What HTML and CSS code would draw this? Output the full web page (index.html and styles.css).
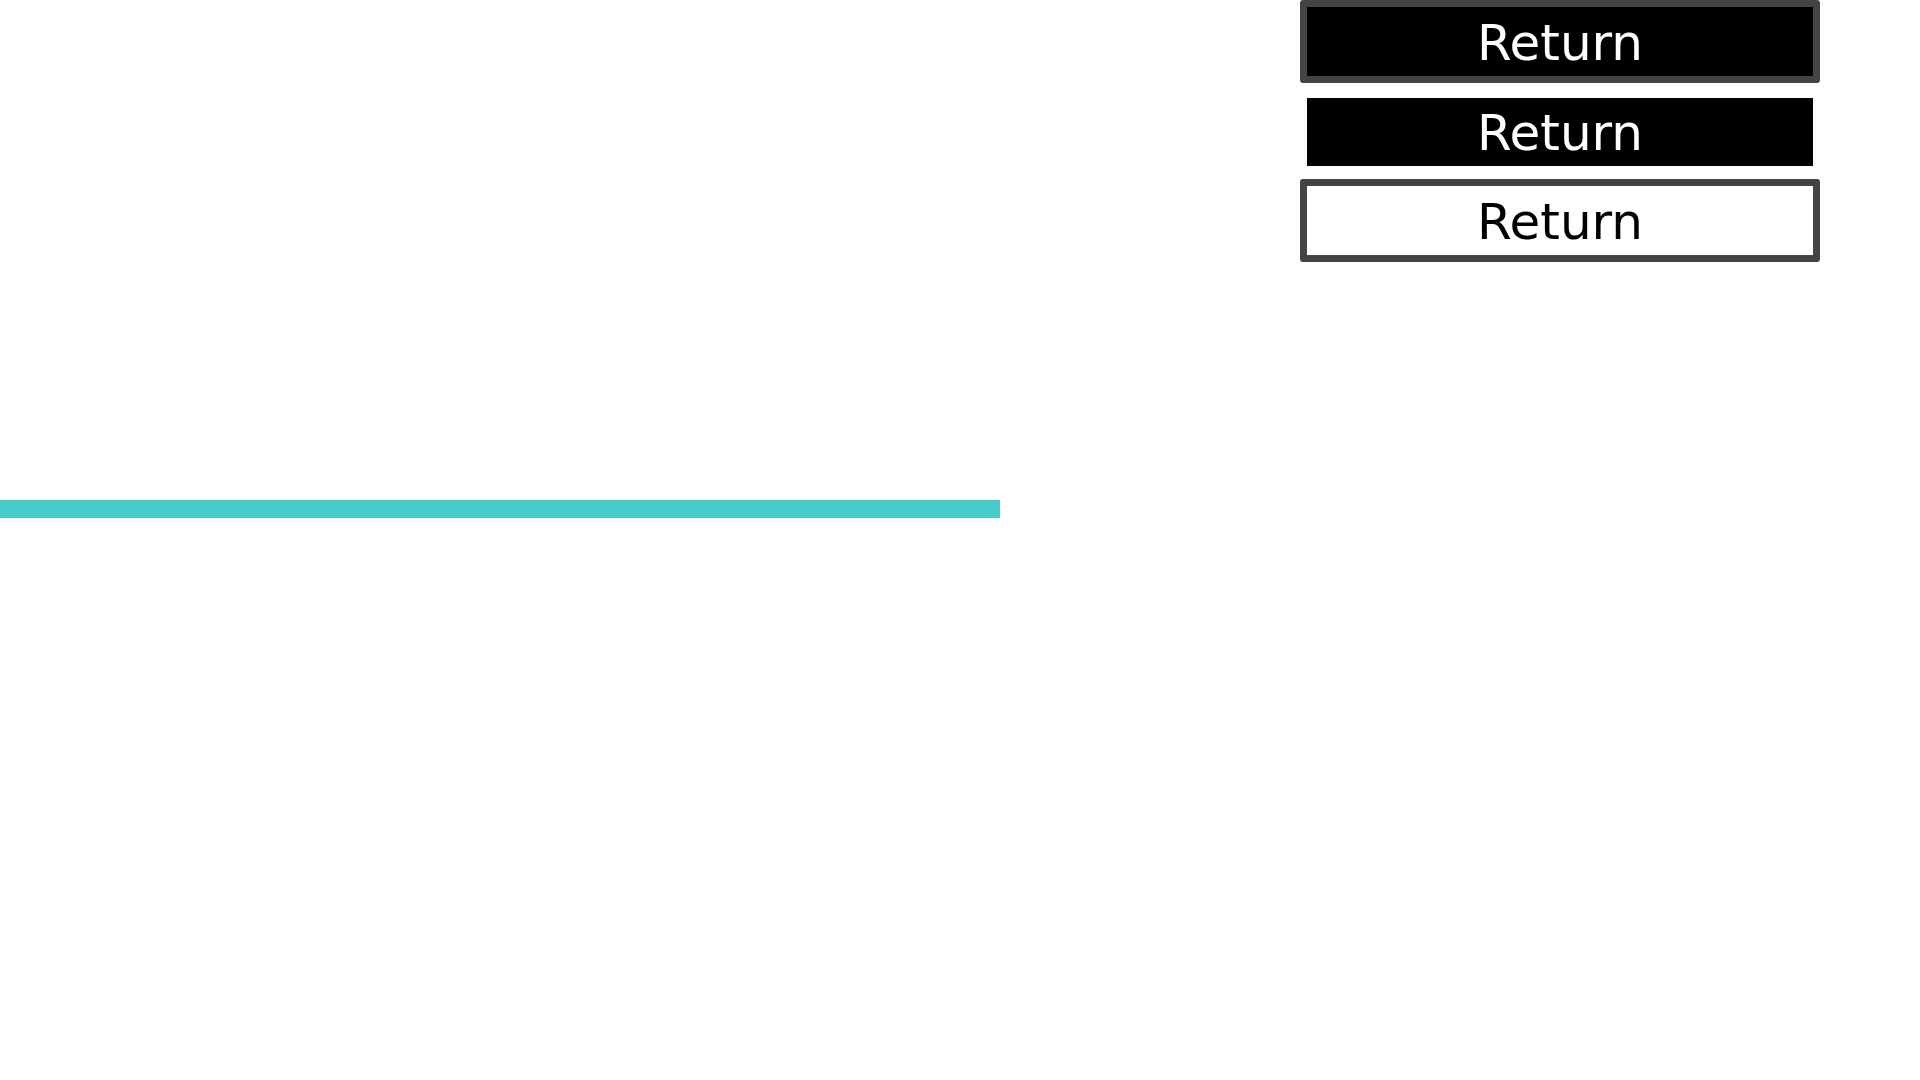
FILE: index.html
```html
<!DOCTYPE html>
<html>
<head>
<meta charset="utf-8">
<title>Return</title>
<link rel="stylesheet" href="styles.css">
</head>
<body>
<div class="page">
  <div class="menu">
    <button class="btn btn-dark">Return</button>
    <button class="btn btn-focus">Return</button>
    <button class="btn btn-light">Return</button>
  </div>
  <div class="progress"></div>
</div>
</body>
</html>
```
FILE: styles.css
```css
html, body {
  margin: 0;
  padding: 0;
  background: #ffffff;
}

.page {
  width: 1920px;
  height: 1080px;
  display: flex;
  flex-direction: column;
}

.menu {
  margin-left: 1300px;
  width: 520px;
  display: flex;
  flex-direction: column;
}

.btn {
  box-sizing: border-box;
  height: 83px;
  width: 100%;
  margin: 0;
  padding: 2px 0 0 0;
  border: 7px solid #444444;
  border-radius: 3px;
  display: flex;
  align-items: center;
  justify-content: center;
  font-family: "DejaVu Sans", sans-serif;
  font-size: 50px;
  line-height: 1;
  cursor: pointer;
}

.btn-dark {
  background: #000000;
  color: #ffffff;
}

.btn-focus {
  height: 82px;
  margin: 8px 0 6px 0;
  border-color: #ffffff;
  background: #000000;
  background-clip: padding-box;
  color: #ffffff;
}

.btn-light {
  background: #ffffff;
  color: #000000;
}

.progress {
  margin-top: 238px;
  width: 1000px;
  height: 18px;
  background: #48cbcb;
}
```
